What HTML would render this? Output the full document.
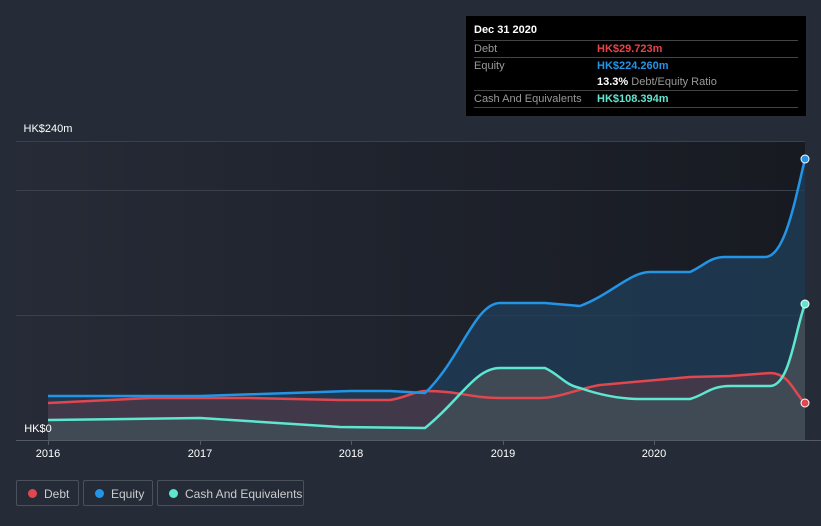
<!DOCTYPE html>
<html><head><style>
body{margin:0;width:821px;height:526px;background:#252b37;font-family:"Liberation Sans",sans-serif;overflow:hidden;position:relative}
.tt{position:absolute;left:466px;top:16px;width:340px;height:100px;background:#000;color:#fff;font-size:11px}
.row{position:absolute;left:8px;width:324px;border-top:1px solid #444;height:16px;line-height:16px}
.lab{color:#999}
.leg{position:absolute;top:480px;height:26px;border:1px solid #4a505c;border-radius:2px;color:#ccc;font-size:12px;line-height:26px;box-sizing:border-box}
.leg i{position:absolute;left:11px;top:8px;width:9px;height:9px;border-radius:50%}
.leg span{position:absolute;left:27px}
</style></head><body>
<svg width="821" height="526" style="position:absolute;left:0;top:0">
<defs><linearGradient id="bg" x1="0" x2="1" y1="0" y2="0"><stop offset="0" stop-color="#262b37"/><stop offset="1" stop-color="#171a21"/></linearGradient></defs>
<rect x="16" y="141" width="789" height="299" fill="url(#bg)"/>
<g stroke="#3a404c" stroke-width="1">
<line x1="16" y1="141.5" x2="805" y2="141.5"/>
<line x1="16" y1="190.5" x2="805" y2="190.5"/>
<line x1="16" y1="315.5" x2="805" y2="315.5"/>
</g>
<path d="M48,396 L200,396 L350,391 L390,391 L425,393 C460,360 475,303 500,303 L545,303 L580,306 C610,295 630,272 650,272 L690,272 C705,265 710,257 725,257 L765,257 C785,257 795,200 805,159 L805,440 L48,440Z" fill="#1f3d58" opacity="0.8"/>
<path d="M48,403 L150,398 L250,398 L340,400 L390,400 C405,398 415,391 425,391 C460,391 470,398 500,398 L540,398 C560,398 580,388 600,385 L690,377 L730,376 L770,373 C790,373 795,395 805,403 L805,440 L48,440Z" fill="#4a3a48" opacity="0.8"/>
<path d="M48,420 L200,418 L340,427 L425,428 C460,400 475,368 500,368 L545,368 C560,375 565,385 580,388 C600,395 620,399 640,399 L690,399 C705,395 710,386 730,386 L770,386 C790,386 795,330 805,304 L805,440 L48,440Z" fill="#3f4a55"/>
<g fill="none" stroke-width="2.5" stroke-linejoin="round">
<path d="M48,403 L150,398 L250,398 L340,400 L390,400 C405,398 415,391 425,391 C460,391 470,398 500,398 L540,398 C560,398 580,388 600,385 L690,377 L730,376 L770,373 C790,373 795,395 805,403" stroke="#e0474f"/>
<path d="M48,396 L200,396 L350,391 L390,391 L425,393 C460,360 475,303 500,303 L545,303 L580,306 C610,295 630,272 650,272 L690,272 C705,265 710,257 725,257 L765,257 C785,257 795,200 805,159" stroke="#2394e6"/>
<path d="M48,420 L200,418 L340,427 L425,428 C460,400 475,368 500,368 L545,368 C560,375 565,385 580,388 C600,395 620,399 640,399 L690,399 C705,395 710,386 730,386 L770,386 C790,386 795,330 805,304" stroke="#5ee6d0"/>
</g>
<circle cx="805" cy="159" r="4" fill="#2394e6" stroke="#fff" stroke-width="1"/>
<circle cx="805" cy="304" r="4" fill="#5ee6d0" stroke="#fff" stroke-width="1"/>
<circle cx="805" cy="403" r="4" fill="#e0474f" stroke="#fff" stroke-width="1"/>
<line x1="16" y1="440.5" x2="821" y2="440.5" stroke="#555b66"/>
<g stroke="#555b66"><line x1="48.5" y1="440" x2="48.5" y2="445"/><line x1="200.5" y1="440" x2="200.5" y2="445"/><line x1="351.5" y1="440" x2="351.5" y2="445"/><line x1="503.5" y1="440" x2="503.5" y2="445"/><line x1="654.5" y1="440" x2="654.5" y2="445"/></g>
<g fill="#fff" font-size="11" font-family="Liberation Sans,sans-serif" text-anchor="middle">
<text x="48" y="457">2016</text><text x="200" y="457">2017</text><text x="351" y="457">2018</text><text x="503" y="457">2019</text><text x="654" y="457">2020</text>
<text x="48" y="132">HK$240m</text><text x="38" y="432">HK$0</text>
</g>
</svg>
<div class="tt">
<div style="position:absolute;left:8px;top:8px;font-weight:bold">Dec 31 2020</div>
<div class="row" style="top:24px"><span class="lab">Debt</span><span style="position:absolute;left:123px;color:#e8434b;font-weight:bold">HK$29.723m</span></div>
<div class="row" style="top:41px"><span class="lab">Equity</span><span style="position:absolute;left:123px;color:#2394e6;font-weight:bold">HK$224.260m</span></div>
<div style="position:absolute;left:131px;top:58px;line-height:16px"><b>13.3%</b> <span class="lab">Debt/Equity Ratio</span></div>
<div class="row" style="top:74px;border-bottom:1px solid #444"><span class="lab">Cash And Equivalents</span><span style="position:absolute;left:123px;color:#5ee6d0;font-weight:bold">HK$108.394m</span></div>
</div>
<div class="leg" style="left:16px;width:63px"><i style="background:#e0474f"></i><span>Debt</span></div>
<div class="leg" style="left:83px;width:70px"><i style="background:#2394e6"></i><span>Equity</span></div>
<div class="leg" style="left:157px;width:147px"><i style="background:#5ee6d0"></i><span>Cash And Equivalents</span></div>
</body></html>
